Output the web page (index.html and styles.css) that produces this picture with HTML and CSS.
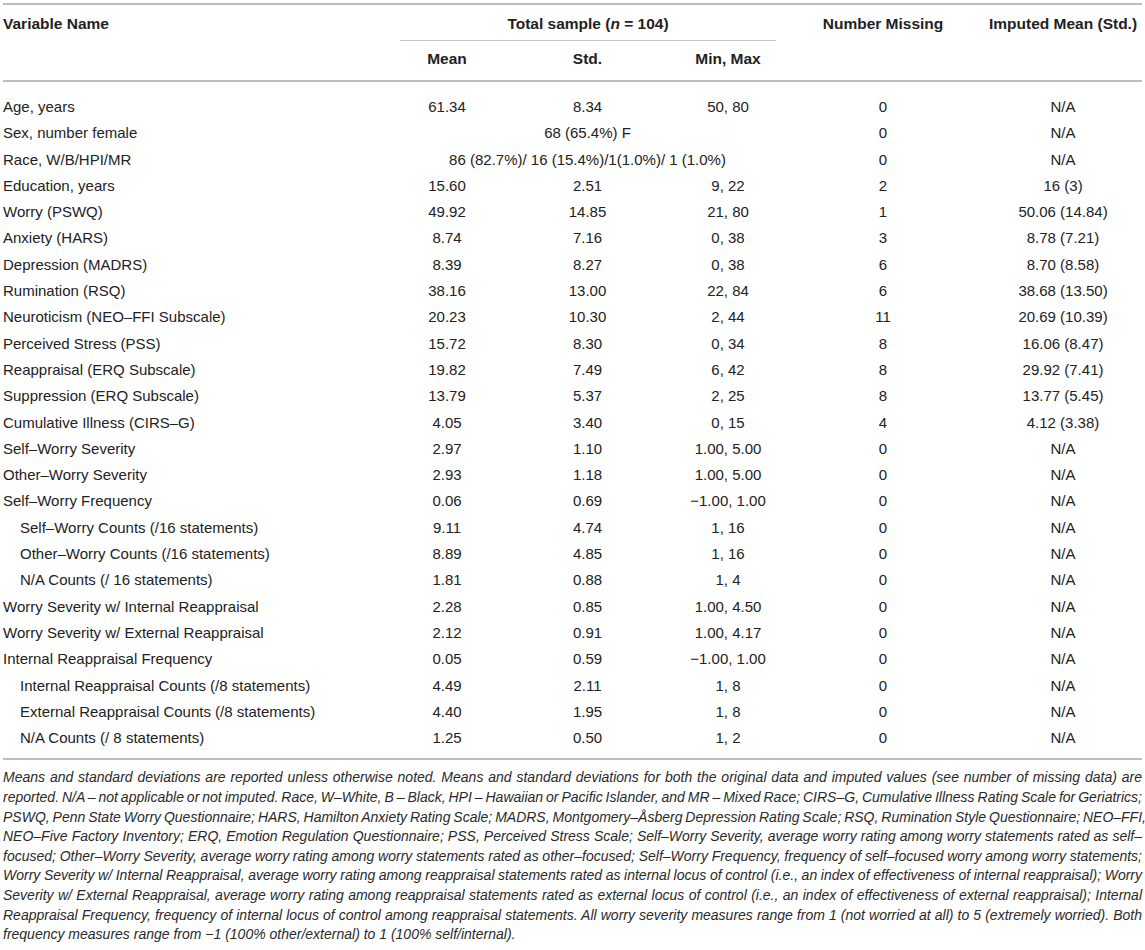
FILE: index.html
```html
<!DOCTYPE html>
<html lang="en">
<head>
<meta charset="utf-8">
<title>Table</title>
<link rel="stylesheet" href="styles.css">
</head>
<body>
<div class="page">
<table class="data">
  <colgroup>
    <col class="c-name"><col class="c-mean"><col class="c-std"><col class="c-mm"><col class="c-miss"><col class="c-imp">
  </colgroup>
  <thead>
    <tr class="h1">
      <th class="name" rowspan="2">Variable Name</th>
      <th class="group" colspan="3"><div class="group-label">Total sample (<i>n</i> = 104)</div></th>
      <th class="miss" rowspan="2">Number Missing</th>
      <th class="imp" rowspan="2">Imputed Mean (Std.)</th>
    </tr>
    <tr class="h2">
      <th>Mean</th><th>Std.</th><th>Min, Max</th>
    </tr>
  </thead>
  <tbody>
    <tr class="first"><td class="name">Age, years</td><td>61.34</td><td>8.34</td><td>50, 80</td><td class="miss">0</td><td class="imp">N/A</td></tr>
    <tr><td class="name">Sex, number female</td><td colspan="3">68 (65.4%) F</td><td class="miss">0</td><td class="imp">N/A</td></tr>
    <tr><td class="name">Race, W/B/HPI/MR</td><td colspan="3">86 (82.7%)/ 16 (15.4%)/1(1.0%)/ 1 (1.0%)</td><td class="miss">0</td><td class="imp">N/A</td></tr>
    <tr><td class="name">Education, years</td><td>15.60</td><td>2.51</td><td>9, 22</td><td class="miss">2</td><td class="imp">16 (3)</td></tr>
    <tr><td class="name">Worry (PSWQ)</td><td>49.92</td><td>14.85</td><td>21, 80</td><td class="miss">1</td><td class="imp">50.06 (14.84)</td></tr>
    <tr><td class="name">Anxiety (HARS)</td><td>8.74</td><td>7.16</td><td>0, 38</td><td class="miss">3</td><td class="imp">8.78 (7.21)</td></tr>
    <tr><td class="name">Depression (MADRS)</td><td>8.39</td><td>8.27</td><td>0, 38</td><td class="miss">6</td><td class="imp">8.70 (8.58)</td></tr>
    <tr><td class="name">Rumination (RSQ)</td><td>38.16</td><td>13.00</td><td>22, 84</td><td class="miss">6</td><td class="imp">38.68 (13.50)</td></tr>
    <tr><td class="name">Neuroticism (NEO–FFI Subscale)</td><td>20.23</td><td>10.30</td><td>2, 44</td><td class="miss">11</td><td class="imp">20.69 (10.39)</td></tr>
    <tr><td class="name">Perceived Stress (PSS)</td><td>15.72</td><td>8.30</td><td>0, 34</td><td class="miss">8</td><td class="imp">16.06 (8.47)</td></tr>
    <tr><td class="name">Reappraisal (ERQ Subscale)</td><td>19.82</td><td>7.49</td><td>6, 42</td><td class="miss">8</td><td class="imp">29.92 (7.41)</td></tr>
    <tr><td class="name">Suppression (ERQ Subscale)</td><td>13.79</td><td>5.37</td><td>2, 25</td><td class="miss">8</td><td class="imp">13.77 (5.45)</td></tr>
    <tr><td class="name">Cumulative Illness (CIRS–G)</td><td>4.05</td><td>3.40</td><td>0, 15</td><td class="miss">4</td><td class="imp">4.12 (3.38)</td></tr>
    <tr><td class="name">Self–Worry Severity</td><td>2.97</td><td>1.10</td><td>1.00, 5.00</td><td class="miss">0</td><td class="imp">N/A</td></tr>
    <tr><td class="name">Other–Worry Severity</td><td>2.93</td><td>1.18</td><td>1.00, 5.00</td><td class="miss">0</td><td class="imp">N/A</td></tr>
    <tr><td class="name">Self–Worry Frequency</td><td>0.06</td><td>0.69</td><td>&minus;1.00, 1.00</td><td class="miss">0</td><td class="imp">N/A</td></tr>
    <tr><td class="name sub">Self–Worry Counts (/16 statements)</td><td>9.11</td><td>4.74</td><td>1, 16</td><td class="miss">0</td><td class="imp">N/A</td></tr>
    <tr><td class="name sub">Other–Worry Counts (/16 statements)</td><td>8.89</td><td>4.85</td><td>1, 16</td><td class="miss">0</td><td class="imp">N/A</td></tr>
    <tr><td class="name sub">N/A Counts (/ 16 statements)</td><td>1.81</td><td>0.88</td><td>1, 4</td><td class="miss">0</td><td class="imp">N/A</td></tr>
    <tr><td class="name">Worry Severity w/ Internal Reappraisal</td><td>2.28</td><td>0.85</td><td>1.00, 4.50</td><td class="miss">0</td><td class="imp">N/A</td></tr>
    <tr><td class="name">Worry Severity w/ External Reappraisal</td><td>2.12</td><td>0.91</td><td>1.00, 4.17</td><td class="miss">0</td><td class="imp">N/A</td></tr>
    <tr><td class="name">Internal Reappraisal Frequency</td><td>0.05</td><td>0.59</td><td>&minus;1.00, 1.00</td><td class="miss">0</td><td class="imp">N/A</td></tr>
    <tr><td class="name sub">Internal Reappraisal Counts (/8 statements)</td><td>4.49</td><td>2.11</td><td>1, 8</td><td class="miss">0</td><td class="imp">N/A</td></tr>
    <tr><td class="name sub">External Reappraisal Counts (/8 statements)</td><td>4.40</td><td>1.95</td><td>1, 8</td><td class="miss">0</td><td class="imp">N/A</td></tr>
    <tr class="last"><td class="name sub">N/A Counts (/ 8 statements)</td><td>1.25</td><td>0.50</td><td>1, 2</td><td class="miss">0</td><td class="imp">N/A</td></tr>
  </tbody>
</table>
<div class="notes">
  <span class="ln">Means and standard deviations are reported unless otherwise noted. Means and standard deviations for both the original data and imputed values (see number of missing data) are</span>
  <span class="ln">reported. N/A – not applicable or not imputed. Race, W–White, B – Black, HPI – Hawaiian or Pacific Islander, and MR – Mixed Race; CIRS–G, Cumulative Illness Rating Scale for Geriatrics;</span>
  <span class="ln">PSWQ, Penn State Worry Questionnaire; HARS, Hamilton Anxiety Rating Scale; MADRS, Montgomery–Åsberg Depression Rating Scale; RSQ, Rumination Style Questionnaire; NEO–FFI,</span>
  <span class="ln">NEO–Five Factory Inventory; ERQ, Emotion Regulation Questionnaire; PSS, Perceived Stress Scale; Self–Worry Severity, average worry rating among worry statements rated as self–</span>
  <span class="ln">focused; Other–Worry Severity, average worry rating among worry statements rated as other–focused; Self–Worry Frequency, frequency of self–focused worry among worry statements;</span>
  <span class="ln">Worry Severity w/ Internal Reappraisal, average worry rating among reappraisal statements rated as internal locus of control (i.e., an index of effectiveness of internal reappraisal); Worry</span>
  <span class="ln">Severity w/ External Reappraisal, average worry rating among reappraisal statements rated as external locus of control (i.e., an index of effectiveness of external reappraisal); Internal</span>
  <span class="ln">Reappraisal Frequency, frequency of internal locus of control among reappraisal statements. All worry severity measures range from 1 (not worried at all) to 5 (extremely worried). Both</span>
  <span class="ln end">frequency measures range from &minus;1 (100% other/external) to 1 (100% self/internal).</span>
</div>
</div>
</body>
</html>
```

FILE: styles.css
```css
html, body {
  margin: 0;
  padding: 0;
  background: #ffffff;
}

.page {
  padding: 3px 3px 0 3px;
  font-family: "Liberation Sans", Arial, sans-serif;
  color: #222222;
}

.data {
  width: 1139px;
  table-layout: fixed;
  border-collapse: collapse;
  font-size: 15px;
}

.c-name { width: 374px; }
.c-mean { width: 140px; }
.c-std { width: 141px; }
.c-mm { width: 140px; }
.c-miss { width: 170px; }
.c-imp { width: 174px; }

.data thead tr.h1 {
  border-top: 2px solid #bdbdbd;
}

.data thead tr.h2 {
  border-bottom: 2px solid #bdbdbd;
}

.data th {
  font-weight: bold;
  font-size: 15.5px;
  line-height: 18px;
  text-align: center;
  vertical-align: top;
  padding: 10px 0 0 0;
}

.data th.name {
  text-align: left;
}

.data th.group {
  padding-bottom: 0;
}

.group-label {
  margin: 0 22px 0 23px;
  padding-bottom: 7px;
  border-bottom: 1px solid #c4c4c4;
}

.data tr.h2 th {
  padding: 9px 0 12px 0;
}

.data td {
  text-align: center;
  line-height: 18.3px;
  padding: 4px 0;
  white-space: nowrap;
}

.data td.name {
  text-align: left;
}

.data td.name.sub {
  padding-left: 17px;
}

.data .imp {
  padding-left: 16px;
}

.data th.imp {
  padding-left: 16px;
}

.data tr.first td {
  padding-top: 16px;
}

.data tr.last td {
  padding-bottom: 11px;
}

.data tbody tr.last {
  border-bottom: 2px solid #bdbdbd;
}

.notes {
  padding-top: 8px;
  font-style: italic;
  font-size: 14px;
  line-height: 19.6px;
  word-spacing: -1px;
  color: #2a2a2a;
}

.notes .ln {
  display: block;
  white-space: nowrap;
  text-align: justify;
  text-align-last: justify;
}

.notes .ln.end {
  text-align-last: left;
  word-spacing: 0;
}
```
